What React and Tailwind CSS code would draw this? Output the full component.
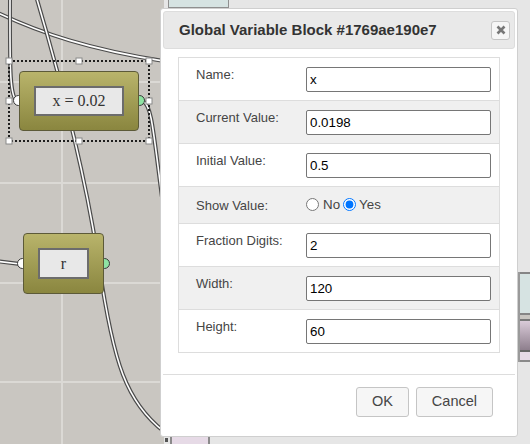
import React from 'react';

const rows = [
  { label: 'Name:', value: 'x' },
  { label: 'Current Value:', value: '0.0198' },
  { label: 'Initial Value:', value: '0.5' },
  { label: 'Show Value:', radio: true },
  { label: 'Fraction Digits:', value: '2' },
  { label: 'Width:', value: '120' },
  { label: 'Height:', value: '60' },
];

function Wire({ d }) {
  return (
    <g fill="none">
      <path d={d} stroke="#4a4a4a" strokeWidth="4" />
      <path d={d} stroke="#ffffff" strokeWidth="1.6" />
    </g>
  );
}

function Node({ x, y, w, h, text }) {
  const cy = y + h / 2;
  return (
    <>
      {/* ports sit under the block so only half shows */}
      <div
        className="absolute w-[11px] h-[11px] rounded-full bg-white border border-[#3a3a3a]"
        style={{ left: x - 6, top: cy - 6 }}
      />
      <div
        className="absolute w-[11px] h-[11px] rounded-full bg-[#8fe3a3] border border-[#3a3a3a]"
        style={{ left: x + w - 5, top: cy - 6 }}
      />
      <div
        className="absolute flex p-[14px] rounded-[4px] border border-[#5c5a38] bg-linear-to-b from-[#b9b46b] to-[#8a863f]"
        style={{ left: x, top: y, width: w, height: h }}
      >
        <div className="flex-1 flex items-center justify-center border-2 border-[#6c6c6c] bg-[#e8e8e8] font-['Liberation_Serif',serif] text-[16px] text-[#333]">
          {text}
        </div>
      </div>
    </>
  );
}

function Canvas() {
  const handles = [
    [9, 61], [79, 61], [149, 61],
    [9, 101], [149, 101],
    [9, 141], [79, 141], [149, 141],
  ];
  return (
    <div className="relative w-[164px] shrink-0 h-full bg-[#c9c6c1]">
      <svg className="absolute inset-0" width="164" height="444">
        <g fill="#dbd9d5">
          <rect x="61" y="0" width="2" height="444" />
          <rect x="0" y="81" width="164" height="2" />
          <rect x="0" y="182" width="164" height="2" />
          <rect x="0" y="282" width="164" height="2" />
          <rect x="0" y="381" width="164" height="2" />
        </g>
        <Wire d="M -4 12 C 40 33, 90 50, 170 62" />
        <Wire d="M 10 -4 C 10 60, 9 96, 17 101" />
        <Wire d="M 36 -4 C 55 60, 85 170, 99 265 S 125 405, 170 436" />
        <Wire d="M 143 101 C 152 106, 153 130, 163 205" />
        <Wire d="M -5 261 L 20 264" />
      </svg>

      <Node x={19} y={71} w={120} h={60} text="x = 0.02" />
      <Node x={23} y={233} w={81} h={61} text="r" />

      <svg className="absolute inset-0" width="164" height="444">
        <rect x="9" y="61" width="140" height="80" fill="none" stroke="#1e1e1e" strokeWidth="2" strokeDasharray="2 2" />
        {handles.map(([hx, hy]) => (
          <rect key={`${hx}-${hy}`} x={hx - 3} y={hy - 3} width="6" height="6" fill="#fff" stroke="#8a8a8a" strokeWidth="1" />
        ))}
      </svg>
    </div>
  );
}

function Dialog() {
  return (
    <div className="absolute left-[160px] top-[8px] w-[358px] h-[429px] flex flex-col p-[2px] bg-white border border-[#cfcfcf] rounded-[3px]">
      <div className="h-[38px] shrink-0 flex items-center justify-between pl-[15px] pr-[4px] bg-[#e9e9e9] border border-[#dddddd] rounded-[3px]">
        <span className="text-[15px] font-bold text-[#333]">Global Variable Block #1769ae190e7</span>
        <button className="w-[19px] h-[19px] flex items-center justify-center bg-[#f6f6f6] border border-[#c5c5c5] rounded-[3px]">
          <svg width="10" height="10" viewBox="0 0 10 10">
            <path d="M1.5 1.5 L8.5 8.5 M8.5 1.5 L1.5 8.5" stroke="#777" strokeWidth="2.6" />
          </svg>
        </button>
      </div>

      <div className="px-[15px] pt-[8px] pb-[21px]">
        <div className="flex flex-col border border-[#dddddd]">
          {rows.map((r, i) => (
            <div
              key={r.label}
              className={`flex items-center pl-[17px] ${i > 0 ? 'border-t border-[#dddddd]' : ''} ${i % 2 ? 'bg-[#f0f0f0]' : 'bg-white'} ${r.radio ? 'h-[37px]' : i === 0 ? 'h-[42px]' : 'h-[43px]'}`}
            >
              <div className={`w-[110px] text-[13px] leading-[15px] text-[#454545] ${r.radio ? '' : 'self-start pt-[9px]'}`}>
                {r.label}
              </div>
              {r.radio ? (
                <div className="flex items-center text-[13.33px] text-[#444]">
                  <label className="flex items-center">
                    <input type="radio" name="show" className="m-0 mr-[4px]" />
                    No
                  </label>
                  <label className="flex items-center ml-[3px]">
                    <input type="radio" name="show" defaultChecked className="m-0 mr-[3px]" />
                    Yes
                  </label>
                </div>
              ) : (
                <input
                  defaultValue={r.value}
                  className="h-[25px] w-[185px] px-[3px] text-[13.33px] text-black bg-white border border-[#767676] rounded-[2px] outline-none"
                />
              )}
            </div>
          ))}
        </div>
      </div>

      <div className="flex justify-end gap-[7px] pt-[12px] pr-[22px] border-t border-[#dddddd]">
        <button className="h-[30px] px-[15px] text-[14.5px] text-[#454545] bg-[#f6f6f6] border border-[#c5c5c5] rounded-[3px]">OK</button>
        <button className="h-[30px] px-[15px] text-[14.5px] text-[#454545] bg-[#f6f6f6] border border-[#c5c5c5] rounded-[3px]">Cancel</button>
      </div>
    </div>
  );
}

export default function App() {
  return (
    <div className="relative flex w-[530px] h-[444px] overflow-hidden bg-[#e6e6e6] font-['Liberation_Sans',Arial,sans-serif]">
      <Canvas />

      {/* other blocks peeking out behind the dialog */}
      <div className="relative flex-1 h-full">
        <div className="absolute left-[4px] top-[-20px] w-[61px] h-[28px] bg-[#d6e3e2] border border-[#8f8f8f]" />
        <div className="absolute left-[354px] top-[272px] w-[20px] flex flex-col border-l-2 border-[#9a9a9a]">
          <div className="h-[2px] bg-[#858585]" />
          <div className="h-[39px] bg-[#d6e3e2]" />
          <div className="h-[2px] bg-[#858585]" />
          <div className="h-[4px] bg-[#c8c5c0]" />
          <div className="h-[2px] bg-[#777]" />
          <div className="h-[29px] bg-linear-to-b from-[#dacbd9] to-[#8e7f8d]" />
          <div className="h-[2px] bg-[#666]" />
          <div className="h-[8px] bg-[#e6dae6]" />
          <div className="h-[2px] bg-[#8a8a8a]" />
        </div>
        <div className="absolute left-[1px] top-[438px] w-[3px] h-[4px] bg-[#555]" />
        <div className="absolute left-[6px] top-[437px] w-[40px] h-[10px] bg-[#e6dae6] border-l-2 border-r-2 border-[#8a8a8a]" />
      </div>

      <Dialog />
    </div>
  );
}
